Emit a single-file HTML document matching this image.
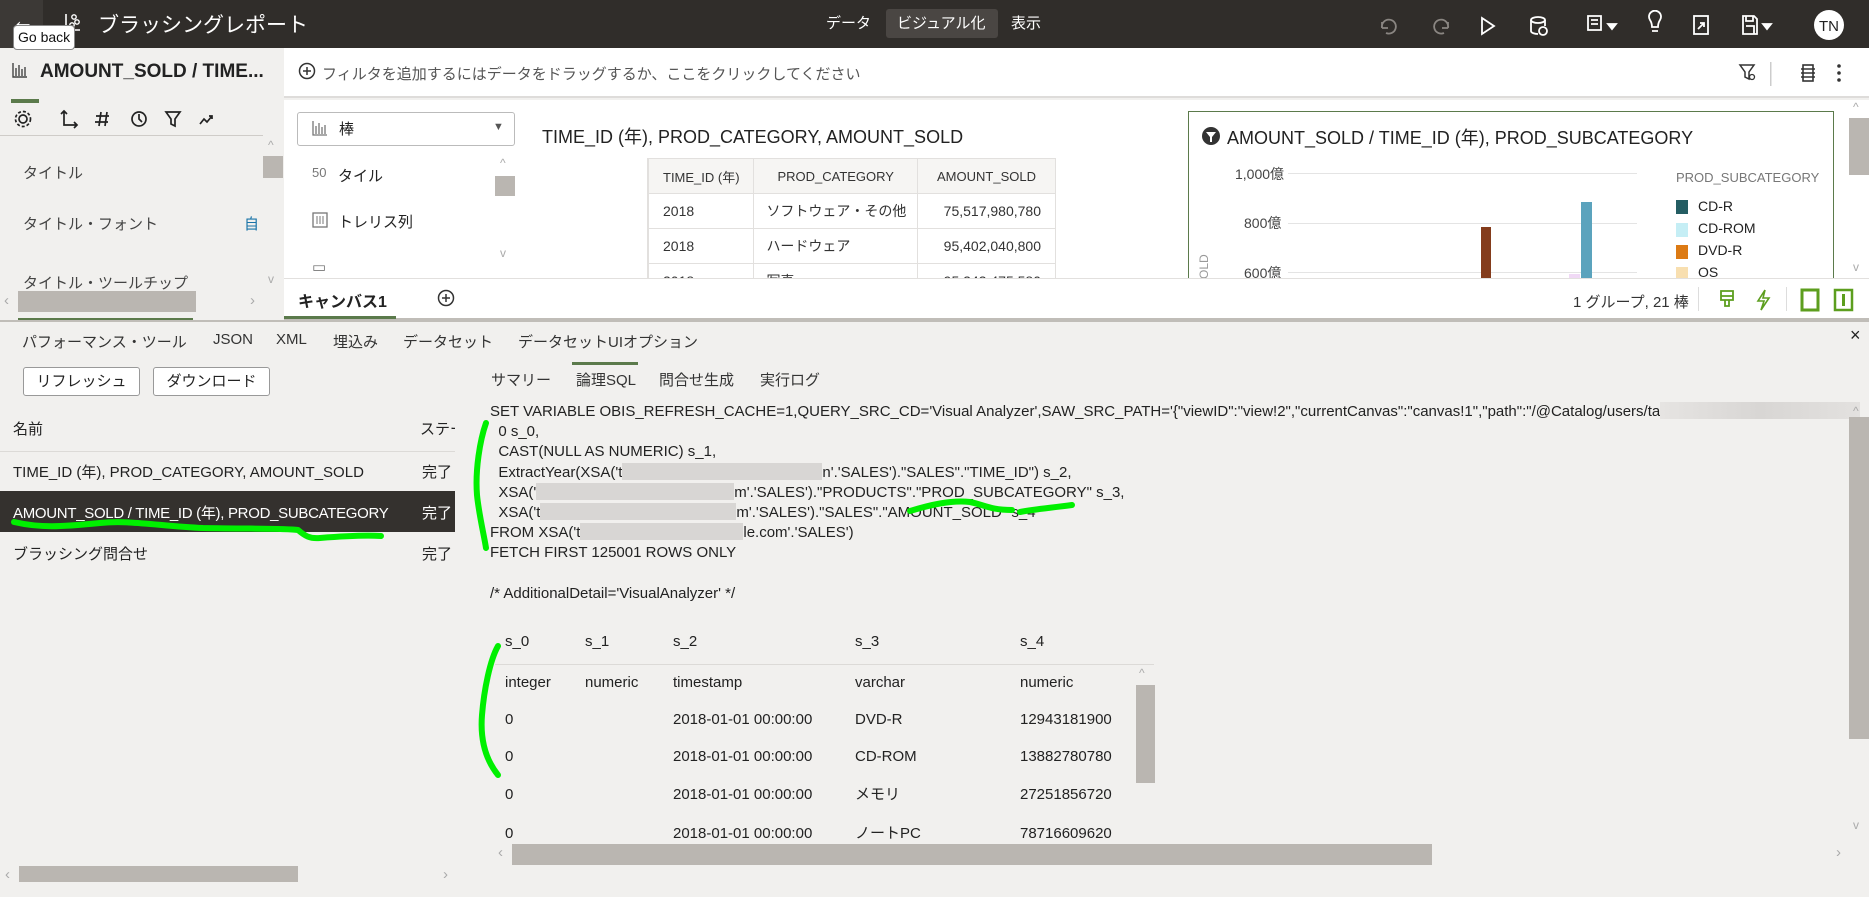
<!DOCTYPE html>
<html><head><meta charset="utf-8">
<style>
*{margin:0;padding:0;box-sizing:border-box}
body{width:1869px;height:897px;overflow:hidden;background:#f1f0ee;font-family:"Liberation Sans","Noto Sans CJK JP",sans-serif;color:#222;position:relative;font-size:15px}
.a{position:absolute;white-space:nowrap}
.top{left:0;top:0;width:1869px;height:48px;background:#302d2a}
.w{color:#fff}
.gray{background:#bab6b1}
.sql{font-size:15px;color:#222}
.b{display:inline-block;height:17px;vertical-align:-3px;background:#d8d6d4}
.hl{stroke:#00f000;stroke-width:6;fill:none;stroke-linecap:round;stroke-linejoin:round}
</style></head><body>
<!-- top bar -->
<div class="a top"></div>
<div class="a" style="left:0;top:0;width:43px;height:48px;background:#3c3936"></div>
<div class="a w" style="left:12px;top:8px;font-size:22px">←</div>
<svg class="a" style="left:64px;top:12px" width="18" height="22" viewBox="0 0 18 22"><path d="M2 2v16h14" stroke="#fff" stroke-width="1.6" fill="none"/><circle cx="10" cy="5" r="2.2" fill="none" stroke="#fff" stroke-width="1.4"/><circle cx="13" cy="10" r="2.2" fill="none" stroke="#fff" stroke-width="1.4"/><circle cx="8" cy="13" r="2.2" fill="none" stroke="#fff" stroke-width="1.4"/></svg>
<div class="a w" style="left:98px;top:9px;font-size:21px">ブラッシングレポート</div>
<div class="a" style="left:13px;top:25px;width:62px;height:25px;background:#fff;border:1px solid #888;border-radius:4px;font-size:14px;padding:3px 4px;color:#111">Go back</div>
<div class="a w" style="left:826px;top:12px;font-size:15px">データ</div>
<div class="a" style="left:886px;top:9px;width:112px;height:29px;background:#4a4643;border-radius:3px"></div>
<div class="a w" style="left:897px;top:12px;font-size:15px">ビジュアル化</div>
<div class="a w" style="left:1011px;top:12px;font-size:15px">表示</div>
<svg class="a" style="left:1370px;top:10px" width="490" height="30" viewBox="0 0 490 30">
<g fill="none" stroke="#8a8682" stroke-width="1.8"><path d="M12 18a7 7 0 1 1 4 5M12 18v-6M12 18h6"/><path d="M78 18a7 7 0 1 0 -4 5M78 18v-6M78 18h-6"/></g>
<g fill="none" stroke="#fff" stroke-width="1.8"><path d="M112 8l12 8-12 8z"/><ellipse cx="168" cy="10" rx="7" ry="3"/><path d="M161 10v11c0 2 4 3 7 3M175 10v6"/><circle cx="173" cy="21" r="4"/><path d="M218 6h13v14h-13zM221 10h7M221 14h7"/><path d="M238 14l4 5 4-5z" fill="#fff"/><path d="M280 10a6 6 0 1 1 10 0c-2 3-2 5-2 7h-6c0-2 0-4-2-7zM282 21h6"/><rect x="324" y="6" width="14" height="18"/><path d="M328 19l6-6M330 13h4v4"/><path d="M373 6h11l3 3v15h-14zM376 6v5h7v-5M376 16h8v8"/><path d="M393 14l4 5 4-5z" fill="#fff"/></g>
<circle cx="459" cy="15" r="15" fill="#fff"/><text x="459" y="21" font-size="15" text-anchor="middle" fill="#222" font-family="Liberation Sans">TN</text></svg>

<!-- left panel -->
<svg class="a" style="left:12px;top:62px" width="16" height="16"><path d="M1 1v14h14M4 6v8M7 3v11M10 7v7M13 5v9" stroke="#444" stroke-width="1.4" fill="none"/></svg>
<div class="a" style="left:40px;top:61px;font-size:19px;font-weight:bold;color:#222">AMOUNT_SOLD / TIME...</div>
<div class="a" style="left:11px;top:99px;width:28px;height:4px;background:#5b7a4b"></div>
<svg class="a" style="left:14px;top:108px" width="230" height="22" viewBox="0 0 230 22"><g fill="none" stroke="#222" stroke-width="1.7"><circle cx="9" cy="11" r="4"/><circle cx="9" cy="11" r="7.5" stroke-dasharray="3 2"/><path d="M50 3v14h12M47 6l3-3 3 3M60 14l3 3-3 3"/><path d="M87 4l-2 14M93 4l-2 14M82 8h13M81 14h13"/><circle cx="125" cy="11" r="7"/><path d="M125 6v5l3 3"/><path d="M152 4h14l-5 7v7l-4-2v-5z"/><path d="M186 16l4-5 3 3 5-6M195 8h3v3"/></g></svg>
<div class="a" style="left:0;top:135px;width:263px;height:1px;background:#cfccc8"></div>
<div class="a gray" style="left:263px;top:156px;width:20px;height:22px"></div>
<div class="a" style="left:268px;top:138px;color:#aaa;font-size:12px">^</div>
<div class="a" style="left:23px;top:162px;color:#444">タイトル</div>
<div class="a" style="left:23px;top:213px;color:#444">タイトル・フォント</div>
<div class="a" style="left:244px;top:213px;color:#1a74a8">自</div>
<div class="a" style="left:23px;top:272px;color:#444">タイトル・ツールチップ</div>
<div class="a" style="left:268px;top:272px;color:#aaa;font-size:12px">v</div>
<div class="a gray" style="left:18px;top:291px;width:178px;height:21px"></div>
<div class="a" style="left:4px;top:292px;color:#aaa">‹</div>
<div class="a" style="left:250px;top:292px;color:#aaa">›</div>
<div class="a" style="left:18px;top:318px;width:175px;height:4px;background:#5b7a4b"></div>

<!-- filter bar -->
<div class="a" style="left:284px;top:48px;width:1585px;height:50px;background:#fff;border-bottom:2px solid #dedcda"></div>
<svg class="a" style="left:298px;top:62px" width="18" height="18"><circle cx="9" cy="9" r="7.5" fill="none" stroke="#333" stroke-width="1.5"/><path d="M9 5v8M5 9h8" stroke="#333" stroke-width="1.5"/></svg>
<div class="a" style="left:322px;top:63px;color:#555;font-size:15px">フィルタを追加するにはデータをドラッグするか、ここをクリックしてください</div>
<svg class="a" style="left:1737px;top:60px" width="120" height="26"><path d="M3 5h14l-5 7v7l-4-2v-5z" fill="none" stroke="#333" stroke-width="1.5"/><circle cx="15" cy="17" r="2.5" fill="none" stroke="#333" stroke-width="1.3"/><rect x="33" y="2" width="1.5" height="26" fill="#ccc"/><rect x="66" y="5" width="10" height="16" fill="none" stroke="#333" stroke-width="1.6"/><path d="M64 9h14M64 13h14M64 17h14" stroke="#333" stroke-width="1.4"/><circle cx="102" cy="6" r="1.8" fill="#333"/><circle cx="102" cy="13" r="1.8" fill="#333"/><circle cx="102" cy="20" r="1.8" fill="#333"/></svg>

<!-- canvas -->
<div class="a" style="left:284px;top:100px;width:1585px;height:178px;background:#fff"></div>
<div class="a" style="left:297px;top:112px;width:218px;height:34px;border:1px solid #bbb;border-radius:3px;background:#fff"></div>
<svg class="a" style="left:312px;top:120px" width="16" height="16"><path d="M1 1v14h14M4 6v8M7 3v11M10 7v7M13 5v9" stroke="#777" stroke-width="1.3" fill="none"/></svg>
<div class="a" style="left:339px;top:118px;font-size:15px">棒</div>
<div class="a" style="left:493px;top:121px;font-size:11px;color:#555">▼</div>
<div class="a" style="left:312px;top:165px;font-size:13px;color:#777">50</div>
<div class="a" style="left:338px;top:165px">タイル</div>
<svg class="a" style="left:312px;top:212px" width="16" height="16"><rect x="1" y="1" width="14" height="14" fill="none" stroke="#777" stroke-width="1.3"/><path d="M5 4v8M8 4v8M11 4v8" stroke="#777"/></svg>
<div class="a" style="left:338px;top:211px">トレリス列</div>
<div class="a" style="left:312px;top:260px;width:16px;height:18px;overflow:hidden;color:#777"><div style="margin-top:-2px">▭</div></div>
<div class="a" style="left:500px;top:156px;color:#aaa;font-size:12px">^</div>
<div class="a gray" style="left:495px;top:176px;width:20px;height:20px"></div>
<div class="a" style="left:500px;top:246px;color:#aaa;font-size:12px">v</div>
<div class="a" style="left:542px;top:123px;font-size:18px;color:#222">TIME_ID (年), PROD_CATEGORY, AMOUNT_SOLD</div>
<div class="a" style="left:647px;top:158px;width:409px;height:120px;overflow:hidden;border-left:1px solid #e2e0de">
<table style="border-collapse:collapse;font-size:14px;color:#333">
<tr style="background:#f6f5f3;height:35px"><td style="width:106px;padding-left:14px;border:1px solid #e2e0de;font-size:13px">TIME_ID (年)</td><td style="width:164px;text-align:center;border:1px solid #e2e0de;font-size:13px">PROD_CATEGORY</td><td style="width:139px;text-align:center;border:1px solid #e2e0de;font-size:13px">AMOUNT_SOLD</td></tr>
<tr style="height:35px"><td style="padding-left:14px;border:1px solid #e2e0de">2018</td><td style="padding-left:12px;border:1px solid #e2e0de">ソフトウェア・その他</td><td style="text-align:right;padding-right:14px;border:1px solid #e2e0de">75,517,980,780</td></tr>
<tr style="height:35px"><td style="padding-left:14px;border:1px solid #e2e0de">2018</td><td style="padding-left:12px;border:1px solid #e2e0de">ハードウェア</td><td style="text-align:right;padding-right:14px;border:1px solid #e2e0de">95,402,040,800</td></tr>
<tr style="height:35px"><td style="padding-left:14px;border:1px solid #e2e0de">2018</td><td style="padding-left:12px;border:1px solid #e2e0de">写真</td><td style="text-align:right;padding-right:14px;border:1px solid #e2e0de">95,243,475,580</td></tr>
</table></div>
<div class="a" style="left:1188px;top:111px;width:646px;height:170px;border:1px solid #5b7a4b;background:#fff;overflow:hidden">
<svg class="a" style="left:12px;top:14px" width="20" height="20"><circle cx="10" cy="10" r="9" fill="#333"/><path d="M5 6h10l-4 5v5h-2v-5z" fill="#fff"/></svg>
<div class="a" style="left:38px;top:12px;font-size:18px">AMOUNT_SOLD / TIME_ID (年), PROD_SUBCATEGORY</div>
<div class="a" style="left:46px;top:52px;font-size:14px;color:#444">1,000億</div>
<div class="a" style="left:55px;top:101px;font-size:14px;color:#444">800億</div>
<div class="a" style="left:55px;top:151px;font-size:14px;color:#444">600億</div>
<div class="a" style="left:8px;font-size:12px;color:#999;transform:rotate(-90deg);transform-origin:left top;top:175px">SOLD</div>
<div class="a" style="left:99px;top:61px;width:349px;height:1px;background:#e4e4e4"></div>
<div class="a" style="left:99px;top:111px;width:349px;height:1px;background:#e4e4e4"></div>
<div class="a" style="left:99px;top:160px;width:349px;height:1px;background:#e4e4e4"></div>
<div class="a" style="left:292px;top:115px;width:10px;height:60px;background:#843c1c"></div>
<div class="a" style="left:392px;top:90px;width:11px;height:80px;background:#5ba3bd"></div>
<div class="a" style="left:380px;top:162px;width:11px;height:10px;background:#f0d9f5"></div>
<div class="a" style="left:487px;top:58px;font-size:13px;color:#777">PROD_SUBCATEGORY</div>
<div class="a" style="left:487px;top:88px;width:12px;height:14px;background:#245d63"></div><div class="a" style="left:509px;top:86px;font-size:14px">CD-R</div>
<div class="a" style="left:487px;top:111px;width:12px;height:14px;background:#c5eef5"></div><div class="a" style="left:509px;top:108px;font-size:14px">CD-ROM</div>
<div class="a" style="left:487px;top:133px;width:12px;height:14px;background:#dc7a14"></div><div class="a" style="left:509px;top:130px;font-size:14px">DVD-R</div>
<div class="a" style="left:487px;top:155px;width:12px;height:14px;background:#f8dfb0"></div><div class="a" style="left:509px;top:152px;font-size:14px">OS</div>
</div>
<div class="a" style="left:1853px;top:100px;color:#aaa;font-size:12px">^</div>
<div class="a gray" style="left:1849px;top:118px;width:20px;height:57px"></div>
<div class="a" style="left:1853px;top:260px;color:#aaa;font-size:12px">v</div>

<!-- tab bar -->
<div class="a" style="left:284px;top:278px;width:1585px;height:42px;background:#fff;border-top:1px solid #e2e0de;border-bottom:2px solid #c0bdb8"></div>
<div class="a" style="left:298px;top:288px;font-size:16px;font-weight:bold">キャンバス1</div>
<div class="a" style="left:284px;top:316px;width:112px;height:3px;background:#5b7a4b"></div>
<svg class="a" style="left:437px;top:289px" width="18" height="18"><circle cx="9" cy="9" r="7.5" fill="none" stroke="#333" stroke-width="1.5"/><path d="M9 5v8M5 9h8" stroke="#333" stroke-width="1.5"/></svg>
<div class="a" style="left:1573px;top:291px;font-size:15px;color:#333">1 グループ, 21 棒</div>
<div class="a" style="left:1698px;top:287px;width:1px;height:24px;background:#ddd"></div>
<div class="a" style="left:1786px;top:287px;width:1px;height:24px;background:#ddd"></div>
<svg class="a" style="left:1716px;top:288px" width="140" height="24"><path d="M5 3h12v9H5zM5 8h12M9 12v6h4v-6" fill="none" stroke="#5c9e1e" stroke-width="1.8"/><path d="M49 2l-7 11h6l-3 9 8-12h-6z" fill="none" stroke="#5c9e1e" stroke-width="1.6"/><rect x="86" y="2" width="16" height="20" fill="none" stroke="#5c9e1e" stroke-width="3"/><rect x="119" y="2" width="17" height="20" fill="none" stroke="#5c9e1e" stroke-width="2.5"/><rect x="126" y="6" width="3" height="12" fill="#5c9e1e"/></svg>
<div class="a" style="left:0;top:320px;width:1869px;height:2px;background:#c0bdb8"></div>

<!-- bottom panel -->
<div class="a" style="left:1850px;top:325px;font-size:18px;color:#222">×</div>
<div class="a" style="left:22px;top:331px;font-size:15px;color:#333">パフォーマンス・ツール</div>
<div class="a" style="left:213px;top:331px;font-size:15px;color:#333">JSON</div>
<div class="a" style="left:276px;top:331px;font-size:15px;color:#333">XML</div>
<div class="a" style="left:333px;top:331px;font-size:15px;color:#333">埋込み</div>
<div class="a" style="left:403px;top:331px;font-size:15px;color:#333">データセット</div>
<div class="a" style="left:518px;top:331px;font-size:15px;color:#333">データセットUIオプション</div>
<div class="a" style="left:23px;top:367px;width:117px;height:29px;border:1px solid #999;border-radius:3px;background:#fff;font-size:15px;text-align:center;line-height:27px">リフレッシュ</div>
<div class="a" style="left:153px;top:367px;width:117px;height:29px;border:1px solid #999;border-radius:3px;background:#fff;font-size:15px;text-align:center;line-height:27px">ダウンロード</div>
<div class="a" style="left:13px;top:418px;font-size:15px">名前</div>
<div class="a" style="left:420px;top:418px;font-size:15px;width:35px;overflow:hidden">ステータス</div>
<div class="a" style="left:0;top:451px;width:455px;height:1px;background:#dcdad7"></div>
<div class="a" style="left:13px;top:461px;font-size:15px">TIME_ID (年), PROD_CATEGORY, AMOUNT_SOLD</div>
<div class="a" style="left:422px;top:461px;font-size:15px">完了</div>
<div class="a" style="left:0;top:491px;width:455px;height:41px;background:#34312e"></div>
<div class="a w" style="left:13px;top:502px;font-size:15px;letter-spacing:-0.3px">AMOUNT_SOLD / TIME_ID (年), PROD_SUBCATEGORY</div>
<div class="a w" style="left:422px;top:502px;font-size:15px">完了</div>
<div class="a" style="left:13px;top:543px;font-size:15px">ブラッシング問合せ</div>
<div class="a" style="left:422px;top:543px;font-size:15px">完了</div>
<div class="a gray" style="left:19px;top:866px;width:279px;height:16px"></div>
<div class="a" style="left:5px;top:866px;color:#aaa">‹</div>
<div class="a" style="left:443px;top:866px;color:#aaa">›</div>

<div class="a" style="left:491px;top:369px;font-size:15px;color:#333">サマリー</div>
<div class="a" style="left:576px;top:369px;font-size:15px;color:#333">論理SQL</div>
<div class="a" style="left:572px;top:362px;width:66px;height:3px;background:#5b7a4b"></div>
<div class="a" style="left:659px;top:369px;font-size:15px;color:#333">問合せ生成</div>
<div class="a" style="left:760px;top:369px;font-size:15px;color:#333">実行ログ</div>

<div class="a sql" style="left:490px;top:402px;line-height:20.2px">SET VARIABLE OBIS_REFRESH_CACHE=1,QUERY_SRC_CD='Visual Analyzer',SAW_SRC_PATH='{"viewID":"view!2","currentCanvas":"canvas!1","path":"/@Catalog/users/ta<span class="b" style="width:200px;background:linear-gradient(90deg,#e6e4e2,#d8d6d4,#e3e1df)"></span><br>
&nbsp;&nbsp;0 s_0,<br>
&nbsp;&nbsp;CAST(NULL AS NUMERIC) s_1,<br>
&nbsp;&nbsp;ExtractYear(XSA('t<span class="b" style="width:200px"></span>n'.'SALES')."SALES"."TIME_ID") s_2,<br>
&nbsp;&nbsp;XSA('<span class="b" style="width:198px"></span>m'.'SALES')."PRODUCTS"."PROD_SUBCATEGORY" s_3,<br>
&nbsp;&nbsp;XSA('t<span class="b" style="width:196px"></span>m'.'SALES')."SALES"."AMOUNT_SOLD" s_4<br>
FROM XSA('t<span class="b" style="width:163px"></span>le.com'.'SALES')<br>
FETCH FIRST 125001 ROWS ONLY<br><br>
/* AdditionalDetail='VisualAnalyzer' */</div>
<div class="a" style="left:1853px;top:404px;color:#aaa;font-size:12px">^</div>
<div class="a gray" style="left:1849px;top:417px;width:20px;height:322px"></div>
<div class="a" style="left:1853px;top:818px;color:#aaa;font-size:12px">v</div>

<div class="a" style="left:505px;top:633px">s_0</div>
<div class="a" style="left:585px;top:633px">s_1</div>
<div class="a" style="left:673px;top:633px">s_2</div>
<div class="a" style="left:855px;top:633px">s_3</div>
<div class="a" style="left:1020px;top:633px">s_4</div>
<div class="a" style="left:495px;top:664px;width:659px;height:1px;background:#dcdad7"></div>
<div class="a" style="left:505px;top:674px">integer</div>
<div class="a" style="left:585px;top:674px">numeric</div>
<div class="a" style="left:673px;top:674px">timestamp</div>
<div class="a" style="left:855px;top:674px">varchar</div>
<div class="a" style="left:1020px;top:674px">numeric</div>
<div class="a" style="left:505px;top:711px">0</div><div class="a" style="left:673px;top:711px">2018-01-01 00:00:00</div><div class="a" style="left:855px;top:711px">DVD-R</div><div class="a" style="left:1020px;top:711px">12943181900</div>
<div class="a" style="left:505px;top:748px">0</div><div class="a" style="left:673px;top:748px">2018-01-01 00:00:00</div><div class="a" style="left:855px;top:748px">CD-ROM</div><div class="a" style="left:1020px;top:748px">13882780780</div>
<div class="a" style="left:505px;top:786px">0</div><div class="a" style="left:673px;top:786px">2018-01-01 00:00:00</div><div class="a" style="left:855px;top:783px">メモリ</div><div class="a" style="left:1020px;top:786px">27251856720</div>
<div class="a" style="left:505px;top:825px">0</div><div class="a" style="left:673px;top:825px">2018-01-01 00:00:00</div><div class="a" style="left:855px;top:822px">ノートPC</div><div class="a" style="left:1020px;top:825px">78716609620</div>
<div class="a" style="left:1139px;top:666px;color:#aaa;font-size:12px">^</div>
<div class="a gray" style="left:1136px;top:685px;width:19px;height:98px"></div>
<div class="a" style="left:495px;top:843px;width:1374px;height:54px;background:#f1f0ee"></div>
<div class="a gray" style="left:512px;top:844px;width:920px;height:21px"></div>
<div class="a" style="left:498px;top:844px;color:#aaa">‹</div>
<div class="a" style="left:1836px;top:844px;color:#aaa">›</div>

<svg class="a" style="left:0;top:0" width="1869" height="897">
<path class="hl" d="M486 423C480 440 475 470 477 495C479 515 484 535 486 548"/>
<path class="hl" d="M14 522C40 528 60 527 100 523C130 520 160 526 203 528C250 529 285 528 298 530C305 536 310 539 320 538C345 536 365 535 381 536"/>
<path class="hl" d="M910 511C930 505 950 500 970 502C985 505 990 510 1012 510"/>
<path class="hl" d="M1020 512C1035 509 1050 508 1072 505"/>
<path class="hl" d="M498 646C490 660 484 690 482 715C480 740 486 760 498 775"/>
</svg>
</body></html>
